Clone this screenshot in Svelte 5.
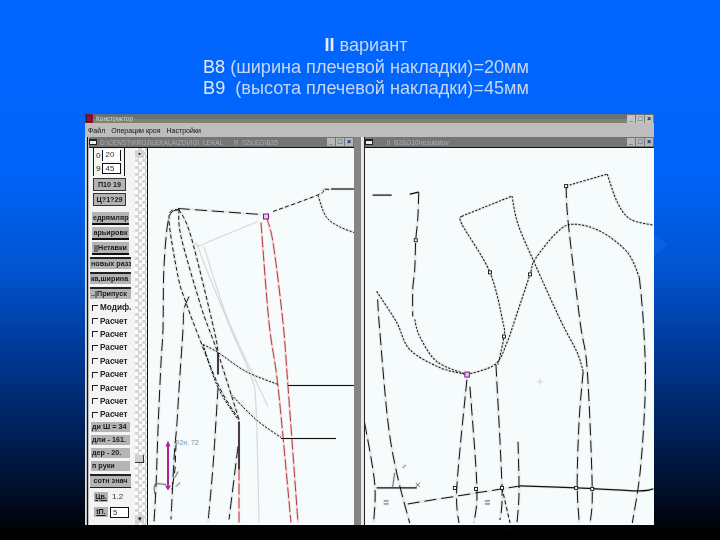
<script>
  function smooth(p) {
    let d = `M${p[0][0]} ${p[0][1]}`;
    for (let i = 0; i < p.length - 1; i++) {
      const a = p[i - 1] || p[i], b = p[i], c = p[i + 1], e = p[i + 2] || c;
      const c1 = [b[0] + (c[0] - a[0]) / 6, b[1] + (c[1] - a[1]) / 6];
      const c2 = [c[0] - (e[0] - b[0]) / 6, c[1] - (e[1] - b[1]) / 6];
      d += ` C${c1[0].toFixed(1)} ${c1[1].toFixed(1)} ${c2[0].toFixed(1)} ${c2[1].toFixed(1)} ${c[0]} ${c[1]}`;
    }
    return d;
  }
  const leftGrey = [
    [[257,222],[202,245],[198,250],[230,330],[250,377],[255,407],[258,523]],
    [[203,247],[227,320],[267,407]],
  ];
  const leftLines = [
    { c: 'long', p: [[177,209],[260,215]] },
    { c: 'short', p: [[272,212],[318,195],[322,190],[329,190]] },
    { c: 'solid', p: [[330,189.5],[353,189.5]] },
    { c: 'dot', p: [[317,196],[325,217],[338,227],[353,233]] },
    { c: 'long', p: [[178,210],[168,218],[163,267],[162,330],[160,363],[157,430],[155,487],[153,523]] },
    { c: 'short', p: [[178,210],[168,218],[177,277],[185,303],[195,330],[218,387],[238,420]] },
    { c: 'short', p: [[178,210],[180,237],[200,307],[212,340],[220,363],[238,420]] },
    { c: 'short', p: [[178,210],[190,237],[213,330],[217,353]] },
    { c: 'long', p: [[188,297],[183,310],[182,330],[178,390],[176,423],[173,460],[170,520]] },
    { c: 'dot', p: [[202,345],[217,353],[245,372],[277,385]] },
    { c: 'solid', p: [[287,386],[353,386]] },
    { c: 'dot', p: [[230,395],[255,420],[280,438]] },
    { c: 'solid', p: [[280,439],[335,439]] },
    { c: 'thick', p: [[217,353],[217,375]] },
    { c: 'long', p: [[217,388],[212,467],[207,523]] },
    { c: 'dot', p: [[202,345],[217,388],[237,420]] },
    { c: 'long', p: [[237,447],[228,520]] },
    { c: 'thick', p: [[238,422],[238,470]] },
    { c: 'thin', p: [[154,495],[154,485],[165,485]] },
    { c: 'thin', p: [[174,478],[177,472]] },
    { c: 'thin', p: [[175,487],[179,483]] },
  ];
  const leftRed = [
    [[260,223],[268,323],[277,387],[290,523]],
    [[265,217],[272,243],[282,323],[287,387],[297,523]],
    [[238,470],[238,523]],
  ];
  const rightLines = [
    { c: 'solid', p: [[373,196],[392,196]] },
    { c: 'solid', p: [[410,195],[419,193]] },
    { c: 'long', p: [[419,193],[418,220],[416,241],[415,270],[413,290],[413,317]] },
    { c: 'dot', p: [[415,320],[420,337],[437,362],[467,375]] },
    { c: 'dot', p: [[377,292],[397,323],[410,350],[440,368],[467,375]] },
    { c: 'long', p: [[378,300],[380,330],[388,420],[397,473],[410,523]] },
    { c: 'long', p: [[365,423],[375,483],[374,523]] },
    { c: 'dot', p: [[462,217],[512,197]] },
    { c: 'dot', p: [[462,217],[462,225],[490,273],[503,323],[504,337],[498,365]] },
    { c: 'dot', p: [[467,375],[495,365],[507,343],[515,320],[530,275],[535,260],[557,233],[573,225],[600,232],[627,253],[639,278]] },
    { c: 'dot', p: [[512,197],[518,225],[535,265],[560,320],[577,353],[583,372]] },
    { c: 'long', p: [[583,372],[579,420],[577,483],[579,523]] },
    { c: 'dot', p: [[566,187],[607,175]] },
    { c: 'dot', p: [[607,175],[617,203],[630,220],[653,226]] },
    { c: 'long', p: [[566,187],[568,223],[580,323],[587,370],[592,487],[590,523]] },
    { c: 'long', p: [[639,278],[643,323],[645,387],[640,470],[632,523]] },
    { c: 'long', p: [[467,380],[457,487],[459,523]] },
    { c: 'long', p: [[470,387],[477,487],[474,523]] },
    { c: 'long', p: [[496,365],[502,487],[500,520]] },
    { c: 'long', p: [[518,442],[519,493],[517,523]] },
    { c: 'short', p: [[502,488],[510,523]] },
    { c: 'solid', p: [[377,488],[417,488]] },
    { c: 'long', p: [[408,504],[520,486]] },
    { c: 'solid', p: [[520,486],[577,488],[637,491],[653,489]] },
    { c: 'thin', p: [[393,487],[395,473]] },
    { c: 'thin', p: [[403,468],[406,465]] },
    { c: 'thin', p: [[384,501],[389,501]] },
    { c: 'thin', p: [[384,504],[389,504]] },
    { c: 'thin', p: [[485,501],[490,501]] },
    { c: 'thin', p: [[485,504],[490,504]] },
  ];
  const squares = [[416,241],[490,273],[530,275],[566,187],[504,337],[455,488],[476,489],[592,489],[576,488],[502,488]];
  const redButtons = ['едрямляр', 'арьировк', '||Нетавки'];
  const wideButtons = ['новых разз', 'ка,ширина', '..|Припуск'];
  const checks = ['Модиф.', 'Расчет', 'Расчет', 'Расчет', 'Расчет', 'Расчет', 'Расчет', 'Расчет', 'Расчет'];
  const valueButtons = ['ди Ш = 34', 'дли - 161.', 'дер - 20.', 'п руки'];
</script>

<div class="slide">
  <div class="diamond"></div>
  <div class="heading">
    <p><b>II</b> вариант</p>
    <p><span>В8</span> (ширина плечевой накладки)=20мм</p>
    <p><span>В9</span>&nbsp; (высота плечевой накладки)=45мм</p>
  </div>

  <div class="window">
    <div class="titlebar">
      <i class="appicon"></i>
      <span class="tt">Конструктор</span>
      <div class="ctrls"><i>_</i><i>□</i><i>×</i></div>
    </div>
    <div class="menu"><span>Файл</span><span>Операции кроя</span><span>Настройки</span></div>
    <div class="desk">
      <div class="child left">
        <div class="childbar">
          <i class="sysicon"></i>
          <span class="tt">D:\CENST\KROJ\LEKALA\ZDVIG\_LEKAL___R_02\LEG\B35</span>
          <div class="ctrls dark"><i>_</i><i>□</i><i>×</i></div>
        </div>
        <div class="childbody">
          <div class="panel">
            <div class="inputs">
              <div class="inrow"><span>0</span><em class="open">20</em></div>
              <div class="inrow"><span>9</span><em>45</em></div>
            </div>
            <div class="btnstack narrow">
              <button>П10 19</button>
              <button>Ц?1?29</button>
            </div>
            <div class="btnstack mid">
              {#each redButtons as b}<button>{b}</button>{/each}
            </div>
            <div class="btnstack wide">
              {#each wideButtons as b}<button>{b}</button>{/each}
            </div>
            <div class="checks">
              {#each checks as c}
                <label><i></i>{c}</label>
              {/each}
            </div>
            <div class="btnstack values">
              {#each valueButtons as b}<button>{b}</button>{/each}
            </div>
            <div class="btnstack single"><button>сотн знач</button></div>
            <div class="foot"><button>Цв.</button><em class="bare">1.2</em></div>
            <div class="foot"><button>tП.</button><em>5</em></div>
          </div>
          <div class="scroll">
            <i class="sbtn">▪</i>
            <i class="thumb"></i>
            <i class="sbtn">▾</i>
          </div>
          <svg class="canvas" viewBox="147 149 206 376">
            {#each leftGrey as p}<path class="grey" d={smooth(p)} />{/each}
            {#each leftRed as p}<path class="halo-red" d={smooth(p)} />{/each}
            {#each leftLines as l}<path class="halo" d={smooth(l.p)} />{/each}
            {#each leftRed as p}<path class="red" d={smooth(p)} />{/each}
            {#each leftLines as l}<path class={l.c} d={smooth(l.p)} />{/each}
            <path class="thinlong" d="M175 445L174 470L171 490" />
            <line class="mag" x1="167" y1="444" x2="167" y2="486" />
            <path class="magfill" d="M167 441l2.5 6h-5zM167 491l-3-5h6z" />
            <rect class="mark" x="262.5" y="214.5" width="5" height="5" />
            <text x="173" y="445" class="lbl">Ф2н. 72</text>
          </svg>
        </div>
      </div>
      <div class="gutter"></div>
      <div class="child right">
        <div class="childbar">
          <i class="sysicon"></i>
          <span class="tt">___II_B2&G10\rezultatov</span>
          <div class="ctrls dark"><i>_</i><i>□</i><i>×</i></div>
        </div>
        <svg class="canvas" viewBox="366 149 287 376">
          {#each rightLines as l}<path class="halo" d={smooth(l.p)} />{/each}
          {#each rightLines as l}<path class={l.c} d={smooth(l.p)} />{/each}
          {#each squares as s}<rect class="sq" x={s[0] - 1.5} y={s[1] - 1.5} width="3" height="3" />{/each}
          <rect class="mark" x="465" y="372.5" width="4.5" height="5" />
          <path class="thin" d="M416 483l4 4M420 483l-4 4" />
          <path class="grey" d="M537 382h6M540 379v6" />
        </svg>
      </div>
    </div>
  </div>
</div>

<style>
  :global(body) { margin: 0; }
  .slide {
    position: relative;
    width: 720px;
    height: 540px;
    overflow: hidden;
    display: flex;
    flex-direction: column;
    background: linear-gradient(180deg, #0066ff 0, #0064fa 170px, #0054cf 270px, #003690 360px, #001b4a 450px, #000a1c 505px, #000 535px);
  }
  .diamond {
    position: absolute;
    left: 640px;
    top: 224px;
    width: 28px;
    height: 42px;
    background: #0b5fe2;
    clip-path: polygon(0 0, 100% 50%, 0 100%);
  }
  .heading {
    position: relative;
    box-sizing: border-box;
    height: 114px;
    width: 732px;
    padding-top: 35px;
    text-align: center;
    font: 18.1px/21.7px "Liberation Sans", Arial, sans-serif;
    color: #c4d6f4;
    filter: blur(0.25px);
  }
  .heading p { margin: 0; white-space: pre; }
  .heading b { color: #e6eefc; }
  .heading span { color: #dfe9fb; }
  .window {
    position: relative;
    box-sizing: border-box;
    margin-left: 85px;
    width: 569px;
    height: 411px;
    background: #bdbdbd;
    display: flex;
    flex-direction: column;
    font-family: "Liberation Sans", Arial, sans-serif;
  }
  .titlebar {
    height: 9px;
    flex: none;
    display: flex;
    align-items: center;
    gap: 3px;
    background: linear-gradient(180deg, #687078 0 55%, #7d8468 55% 100%);
    color: #d8d8d8;
    font-size: 6.5px;
    overflow: hidden;
  }
  .appicon {
    width: 8px;
    height: 9px;
    background: #8a1530;
    outline: 1px solid #402030;
    outline-offset: -2px;
  }
  .tt {
    flex: 1;
    white-space: nowrap;
    overflow: hidden;
    filter: blur(0.4px);
  }
  .ctrls { display: flex; gap: 1px; margin-right: 1px; }
  .ctrls i {
    width: 8px;
    height: 8px;
    background: #c4c4c4;
    color: #111;
    font: bold 7px/8px "Liberation Sans", sans-serif;
    text-align: center;
  }
  .ctrls.dark i { background: #b8b8b8; }
  .menu {
    height: 14px;
    flex: none;
    display: flex;
    gap: 6px;
    align-items: center;
    padding-left: 3px;
    font-size: 7px;
    color: #111;
  }
  .menu span { filter: blur(0.4px); }
  .desk {
    flex: 1;
    min-height: 0;
    display: flex;
    padding-left: 1px;
    border-left: 1px solid #ddd;
  }
  .child {
    display: flex;
    flex-direction: column;
    min-width: 0;
  }
  .child.left { width: 267px; flex: none; padding-left: 1px; border-left: 1px solid #111; box-sizing: border-box; }
  .child.right { flex: 1; }
  .gutter {
    flex: none;
    width: 11px;
    background: linear-gradient(90deg, #858585 0 7px, #e8e8e8 7px 10px, #222 10px);
  }
  .childbar {
    height: 11px;
    flex: none;
    display: flex;
    align-items: center;
    gap: 3px;
    background: #757575;
    border-bottom: 1px solid #111;
    color: #a9b0b8;
    font-size: 6.5px;
    box-sizing: border-box;
  }
  .sysicon {
    width: 8px;
    height: 6px;
    background: #eee;
    border: 1px solid #222;
    border-top-width: 2px;
    box-sizing: border-box;
    flex: none;
  }
  .childbody {
    flex: 1;
    min-height: 0;
    display: flex;
  }
  .panel {
    width: 46px;
    flex: none;
    background: #f4f4f4;
    padding-left: 1px;
    box-sizing: border-box;
    display: flex;
    flex-direction: column;
    font-size: 8px;
    overflow: hidden;
  }
  .inputs {
    margin: 0 10px 0 3px;
    height: 28px;
    padding-top: 1px;
    border: 1px solid #111;
    border-width: 0 1px 0 1px;
    box-sizing: border-box;
    display: flex;
    flex-direction: column;
    gap: 1px;
  }
  .inrow { display: flex; gap: 2px; height: 12px; align-items: center; padding-left: 2px; color: #222; }
  em {
    font-style: normal;
    font-size: 8px;
    line-height: 10px;
    height: 11px;
    width: 19px;
    border: 1px solid #111;
    box-sizing: border-box;
    background: #fff;
    padding-left: 2px;
    color: #333;
    filter: blur(0.3px);
  }
  em.open { border-width: 0 1px 0 1px; }
  em.bare { border: 0; background: transparent; width: 24px; }
  .btnstack { display: flex; flex-direction: column; }
  button {
    font: bold 7.2px/10px "Liberation Sans", sans-serif;
    color: #1a1a1a;
    background: #b4b4b4;
    border: 0;
    padding: 0 1px;
    text-align: center;
    white-space: nowrap;
    overflow: hidden;
    filter: blur(0.3px);
    box-sizing: border-box;
  }
  .narrow { margin: 3px 10px 0 4px; gap: 4px; }
  .narrow button { height: 11px; outline: 1px solid #333; }
  .mid { margin: 7px 6px 0 2px; gap: 2px; }
  .mid button { border-bottom: 2px solid #111; height: 13px; }
  .wide { margin: 2px 4px 0 0; gap: 3px; }
  .wide button { height: 12px; border-top: 2px solid #222; text-align: left; }
  .checks { display: flex; flex-direction: column; margin-top: 2px; }
  label {
    height: 13.4px;
    display: flex;
    align-items: center;
    gap: 2px;
    padding-left: 2px;
    font: bold 8.2px "Liberation Sans", sans-serif;
    color: #222;
    white-space: nowrap;
    filter: blur(0.25px);
  }
  label i {
    width: 5px;
    height: 5px;
    flex: none;
    border-left: 1px solid #222;
    border-top: 1px solid #222;
  }
  .values { margin: 0 5px 0 1px; gap: 3px; }
  .values button { height: 10px; text-align: left; }
  .single { margin: 3px 4px 0 0; }
  .single button { border-top: 2px solid #222; border-bottom: 1px solid #222; height: 14px; }
  .foot { display: flex; gap: 2px; margin: 4px 0 0 4px; height: 11px; }
  .foot button { width: 14px; height: 10px; text-decoration: underline; }
  .scroll {
    width: 12px;
    flex: none;
    display: flex;
    flex-direction: column;
    border-right: 1px solid #111;
    background: repeating-conic-gradient(#d6d6d6 0 25%, #fdfdfd 0 50%) 0 0 / 7px 7px;
  }
  .sbtn {
    width: 9px;
    height: 8px;
    margin-top: 2px;
    background: #d4d4d4;
    color: #111;
    font: 7px/8px "Liberation Sans", sans-serif;
    text-align: center;
  }
  .thumb {
    width: 9px;
    height: 8px;
    margin-top: auto;
    background: #cfcfcf;
    border-right: 1px solid #333;
    border-bottom: 1px solid #333;
    box-sizing: border-box;
  }
  .scroll .thumb + .sbtn { margin-top: 52px; margin-bottom: 2px; }
  .canvas {
    flex: 1;
    min-width: 0;
    min-height: 0;
    width: 100%;
    height: 100%;
    display: block;
    background: #f6fbfb;
  }
  path { fill: none; stroke: #111; stroke-width: 1; }
  .solid { stroke-width: 1.2; }
  .thin { stroke: #444; stroke-width: 0.8; }
  .thick { stroke: #2a1020; stroke-width: 1.6; }
  .long { stroke-dasharray: 12 5; }
  .thinlong { stroke-dasharray: 7 4; }
  .short { stroke-dasharray: 4 2.5; }
  .dot { stroke-dasharray: 2.2 1.4; }
  .grey { stroke: #d5d9da; stroke-width: 1.2; }
  .halo { stroke: #e6ebec; stroke-width: 3; }
  .halo-red { stroke: #f3dcd8; stroke-width: 2.5; }
  .red { stroke: #b83848; stroke-width: 1; stroke-dasharray: 11 3; }
  .mag { stroke: #b0209c; stroke-width: 2; }
  .magfill { fill: #b0209c; stroke: none; }
  .mark { fill: #e8c8ee; stroke: #801090; stroke-width: 1; }
  .sq { fill: #fff; stroke: #111; stroke-width: 0.9; }
  .lbl { font: 7px "Liberation Sans", sans-serif; fill: #7f8fa5; }
</style>
